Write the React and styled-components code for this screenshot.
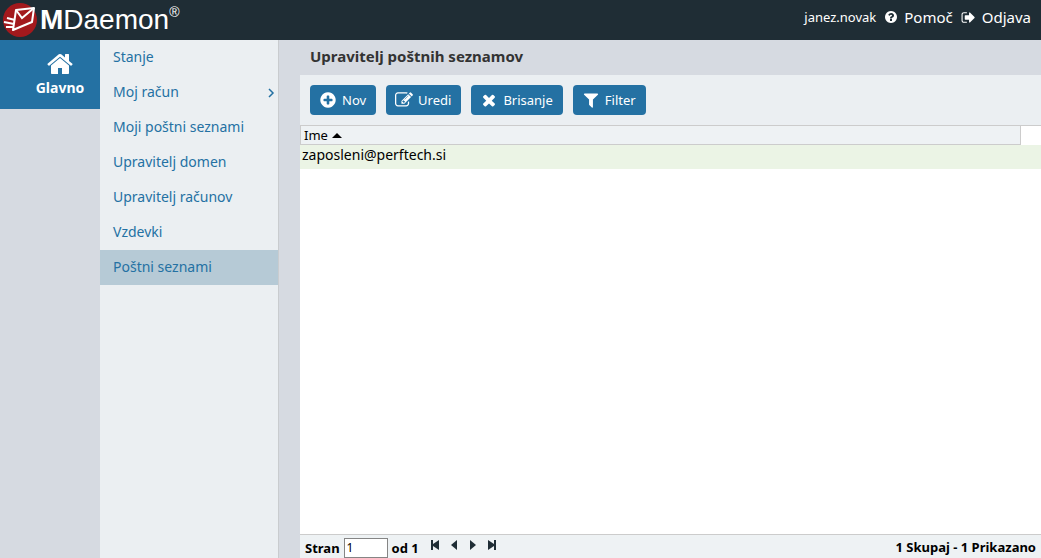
import React, { useState } from "react";
import styled, { createGlobalStyle } from "styled-components";

const GlobalStyle = createGlobalStyle`
  * {
    box-sizing: border-box;
  }
  body {
    margin: 0;
    font-family: "Noto Sans", "Open Sans", sans-serif;
    font-size: 13px;
    color: #000;
    background: #d6dae1;
  }
  button, input {
    font-family: inherit;
  }
`;

const Page = styled.div`
  min-height: 100vh;
  display: flex;
  flex-direction: column;
`;

const Header = styled.header`
  height: 40px;
  display: flex;
  align-items: center;
  justify-content: space-between;
  padding: 0 10px 0 3px;
  color: #fff;
  background: #1f2d35;
`;

const Brand = styled.a`
  display: flex;
  align-items: center;
  gap: 3px;
  color: #fff;
  font-family: "Liberation Sans", Arial, sans-serif;
  font-size: 28px;
  line-height: 40px;
  text-decoration: none;
  sup {
    font-size: 14px;
    line-height: 14px;
    vertical-align: 12px;
  }
`;

const UserLinks = styled.nav`
  display: flex;
  align-items: center;
  gap: 8px;
  padding-bottom: 6px;
  line-height: 20px;
`;

const UserLink = styled.a`
  display: flex;
  align-items: center;
  gap: 6px;
  color: #fff;
  font-size: 15px;
  text-decoration: none;
`;

const Body = styled.div`
  flex: 1;
  display: flex;
`;

const Rail = styled.nav`
  width: 100px;
  flex-shrink: 0;
`;

const RailButton = styled.a`
  height: 69px;
  display: flex;
  flex-direction: column;
  align-items: center;
  padding: 10px 0 0 20px;
  color: #fff;
  font-size: 14px;
  font-weight: bold;
  line-height: 20px;
  text-decoration: none;
  background: #2471a3;
`;

const Menu = styled.nav`
  width: 179px;
  flex-shrink: 0;
  background: #ebeff2;
  border-right: 1px solid #c9cccf;
`;

const MenuItem = styled.a`
  height: 35px;
  display: flex;
  align-items: center;
  justify-content: space-between;
  padding: 0 3px 3px 13px;
  color: #2471a3;
  font-size: 14px;
  text-decoration: none;
  background: ${({ $active }) => ($active ? "#b6cad6" : "transparent")};
  svg {
    margin-top: 4px;
  }
`;

const Main = styled.main`
  flex: 1;
  min-width: 0;
  display: flex;
  flex-direction: column;
  margin-left: 21px;
  background: #fff;
`;

const Title = styled.h1`
  margin: 0;
  padding: 0 10px 2px;
  color: #333;
  font-size: 15px;
  line-height: 33px;
  background: #d6dae1;
`;

const Toolbar = styled.div`
  display: flex;
  gap: 10px;
  padding: 10px;
  background: #ebeff2;
`;

const ToolButton = styled.button`
  height: 30px;
  display: flex;
  align-items: center;
  gap: 5px;
  padding: 0 10px 0 9px;
  border: 0;
  border-radius: 4px;
  color: #fff;
  font-size: 13px;
  background: #2471a3;
`;

const Table = styled.table`
  width: 100%;
  border-collapse: separate;
  border-spacing: 0;
  border-top: 1px solid #ccc;
`;

const HeadCell = styled.th`
  height: 19px;
  padding: 0 3px;
  border: 1px solid #ccc;
  border-top: 0;
  font-weight: normal;
  text-align: left;
  background: #eef2f4;
`;

const SpareCell = styled.td`
  width: 20px;
  padding: 0;
`;

const SortButton = styled.button`
  display: flex;
  align-items: center;
  gap: 4px;
  padding: 0;
  border: 0;
  color: #000;
  font-size: 13px;
  line-height: 16px;
  background: none;
`;

const Cell = styled.td`
  height: 24px;
  padding: 0 2px 4px;
  font-size: 14px;
  line-height: 20px;
  background: #ebf4e5;
`;

const Footer = styled.footer`
  display: flex;
  align-items: center;
  justify-content: space-between;
  height: 24px;
  margin-top: auto;
  padding: 0 5px;
  border-top: 1px solid #ccc;
  font-size: 13px;
  font-weight: bold;
  line-height: 20px;
  background: #eef2f4;
`;

const Pager = styled.div`
  display: flex;
  align-items: center;
  gap: 4px;
  padding-top: 2px;
`;

const PageInput = styled.input`
  width: 44px;
  height: 20px;
  padding: 0 2px;
  border: 1px solid #858585;
  color: #000;
  font-size: 12px;
  background: #fff;
`;

const PageButtons = styled.div`
  display: flex;
  margin-left: 3px;
`;

const PageButton = styled.button`
  width: 19px;
  height: 20px;
  display: flex;
  justify-content: center;
  padding: 1px 0 0;
  border: 0;
  color: #1f2d35;
  background: none;
`;

const Glyph = styled.svg`
  flex-shrink: 0;
  fill: currentColor;
`;

const paths = {
  home: "M1472 992v480q0 26-19 45t-45 19h-384v-384h-256v384h-384q-26 0-45-19t-19-45v-480q0-1 .5-3t.5-3l575-474 575 474q1 2 1 6zm223-69l-62 74q-8 9-21 11h-3q-13 0-21-7l-692-577-692 577q-12 8-24 7-13-2-21-11l-62-74q-8-10-7-23.5t11-21.5l719-599q32-26 76-26t76 26l244 204v-195q0-14 9-23t23-9h192q14 0 23 9t9 23v408l219 182q10 8 11 21.5t-7 23.5z",
  plus: "M1344 960v-128q0-26-19-45t-45-19h-256v-256q0-26-19-45t-45-19h-128q-26 0-45 19t-19 45v256h-256q-26 0-45 19t-19 45v128q0 26 19 45t45 19h256v256q0 26 19 45t45 19h128q26 0 45-19t19-45v-256h256q26 0 45-19t19-45zm320-64q0 209-103 385.5t-279.5 279.5-385.5 103-385.5-103-279.5-279.5-103-385.5 103-385.5 279.5-279.5 385.5-103 385.5 103 279.5 279.5 103 385.5z",
  edit: "M888 1184l116-116-152-152-116 116v56h96v96h56zm440-720q-16-16-33 1l-350 350q-17 17-1 33t33-1l350-350q17-17 1-33zm80 594v190q0 119-84.5 203.5t-203.5 84.5h-832q-119 0-203.5-84.5t-84.5-203.5v-832q0-119 84.5-203.5t203.5-84.5h832q63 0 117 25 15 7 18 23 3 17-9 29l-49 49q-14 14-32 8-23-6-45-6h-832q-66 0-113 47t-47 113v832q0 66 47 113t113 47h832q66 0 113-47t47-113v-126q0-13 9-22l64-64q15-15 35-7t20 29zm-96-738l288 288-672 672h-288v-288zm444 132l-92 92-288-288 92-92q28-28 68-28t68 28l152 152q28 28 28 68t-28 68z",
  times: "M1490 1322q0 40-28 68l-136 136q-28 28-68 28t-68-28l-294-294-294 294q-28 28-68 28t-68-28l-136-136q-28-28-28-68t28-68l294-294-294-294q-28-28-28-68t28-68l136-136q28-28 68-28t68 28l294 294 294-294q28-28 68-28t68 28l136 136q28 28 28 68t-28 68l-294 294 294 294q28 28 28 68z",
  filter: "M1595 295q17 41-14 70l-493 493v742q0 42-39 59-13 5-25 5-27 0-45-19l-256-256q-19-19-19-45v-486l-493-493q-31-29-14-70 17-39 59-39h1280q42 0 59 39z",
  help: "M1024 1376v-192q0-14-9-23t-23-9h-192q-14 0-23 9t-9 23v192q0 14 9 23t23 9h192q14 0 23-9t9-23zm256-672q0-88-55.5-163t-138.5-116-170-41q-243 0-371 213-15 24 8 42l132 100q7 6 19 6 16 0 25-12 53-68 86-92 34-24 86-24 48 0 85.5 26t37.5 59q0 38-20 61t-68 45q-63 28-115.5 86.5t-52.5 125.5v36q0 14 9 23t23 9h192q14 0 23-9t9-23q0-19 21.5-49.5t54.5-49.5q32-18 49-28.5t46-35 44.5-48 28-60.5 12.5-81zm384 192q0 209-103 385.5t-279.5 279.5-385.5 103-385.5-103-279.5-279.5-103-385.5 103-385.5 279.5-279.5 385.5-103 385.5 103 279.5 279.5 103 385.5z",
  logout: "M704 1440q0 4 1 20t.5 26.5-3 23.5-10 19.5-20.5 6.5h-320q-119 0-203.5-84.5t-84.5-203.5v-704q0-119 84.5-203.5t203.5-84.5h320q13 0 22.5 9.5t9.5 22.5q0 4 1 20t.5 26.5-3 23.5-10 19.5-20.5 6.5h-320q-66 0-113 47t-47 113v704q0 66 47 113t113 47h312l11.5 1 11.5 3 8 5.5 7 9 2 13.5zm928-544q0 26-19 45l-544 544q-19 19-45 19t-45-19-19-45v-288h-448q-26 0-45-19t-19-45v-384q0-26 19-45t45-19h448v-288q0-26 19-45t45-19 45 19l544 544q19 19 19 45z",
};

const Icon = ({ name, size }) => (
  <Glyph width={size} height={size} viewBox="0 0 1792 1792" aria-hidden="true">
    <path d={paths[name]} />
  </Glyph>
);

const Logo = () => (
  <svg width="34" height="34" viewBox="0 0 34 34" aria-hidden="true">
    <circle cx="17" cy="17" r="17" fill="#a3191d" />
    <path
      d="M13 7L31 5L29 19L10 27Z"
      fill="#a3191d"
      stroke="#fff"
      strokeWidth="2"
      strokeLinejoin="round"
    />
    <path
      d="M13 7L19 15L31 5M4 15L12 17M1 19L11 21M3 24L10 24"
      fill="none"
      stroke="#fff"
      strokeWidth="2"
    />
  </svg>
);

const menu = [
  { label: "Stanje" },
  { label: "Moj račun", more: true },
  { label: "Moji poštni seznami" },
  { label: "Upravitelj domen" },
  { label: "Upravitelj računov" },
  { label: "Vzdevki" },
  { label: "Poštni seznami" },
];

const tools = [
  { label: "Nov", icon: "plus" },
  { label: "Uredi", icon: "edit" },
  { label: "Brisanje", icon: "times" },
  { label: "Filter", icon: "filter" },
];

const pages = [
  { label: "Prva stran", d: "M1 1H3V5L9 1V11L3 7V11H1Z" },
  { label: "Prejšnja stran", d: "M8 1V11L2 6Z" },
  { label: "Naslednja stran", d: "M2 1V11L8 6Z" },
  { label: "Zadnja stran", d: "M9 1H7V5L1 1V11L7 7V11H9Z" },
];

export default () => {
  const [active, setActive] = useState("Poštni seznami");
  const [page, setPage] = useState("1");

  return (
    <Page>
      <GlobalStyle />
      <Header>
        <Brand href="#">
          <Logo />
          <span>
            <b>M</b>Daemon<sup>®</sup>
          </span>
        </Brand>
        <UserLinks>
          <span>janez.novak</span>
          <UserLink href="#">
            <Icon name="help" size={14} />
            Pomoč
          </UserLink>
          <UserLink href="#">
            <Icon name="logout" size={15} />
            Odjava
          </UserLink>
        </UserLinks>
      </Header>
      <Body>
        <Rail>
          <RailButton href="#">
            <Icon name="home" size={28} />
            Glavno
          </RailButton>
        </Rail>
        <Menu>
          {menu.map(({ label, more }) => (
            <MenuItem
              key={label}
              href="#"
              $active={label === active}
              onClick={() => setActive(label)}
            >
              {label}
              {more && (
                <svg width="7" height="10" viewBox="0 0 7 10" aria-hidden="true">
                  <path d="M1 1L5 5L1 9" fill="none" stroke="#2471a3" strokeWidth="1.5" />
                </svg>
              )}
            </MenuItem>
          ))}
        </Menu>
        <Main>
          <Title>Upravitelj poštnih seznamov</Title>
          <Toolbar>
            {tools.map(({ label, icon }) => (
              <ToolButton key={label} type="button">
                <Icon name={icon} size={18} />
                {label}
              </ToolButton>
            ))}
          </Toolbar>
          <Table>
            <thead>
              <tr>
                <HeadCell>
                  <SortButton type="button">
                    Ime
                    <Glyph width="10" height="5" viewBox="0 0 10 5" aria-hidden="true">
                      <path d="M0 5L5 0L10 5Z" />
                    </Glyph>
                  </SortButton>
                </HeadCell>
                <SpareCell />
              </tr>
            </thead>
            <tbody>
              <tr>
                <Cell colSpan={2}>zaposleni@perftech.si</Cell>
              </tr>
            </tbody>
          </Table>
          <Footer>
            <Pager>
              <label htmlFor="page">Stran</label>
              <PageInput id="page" value={page} onChange={(e) => setPage(e.target.value)} />
              <span>od 1</span>
              <PageButtons>
                {pages.map(({ label, d }) => (
                  <PageButton key={label} type="button" aria-label={label}>
                    <Glyph width="10" height="12" viewBox="0 0 10 12">
                      <path d={d} />
                    </Glyph>
                  </PageButton>
                ))}
              </PageButtons>
            </Pager>
            <span>1 Skupaj - 1 Prikazano</span>
          </Footer>
        </Main>
      </Body>
    </Page>
  );
};
